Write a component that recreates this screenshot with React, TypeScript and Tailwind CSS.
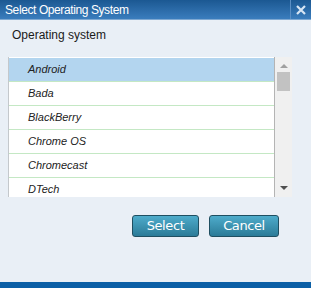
import React from "react";

const systems = ["Android", "Bada", "BlackBerry", "Chrome OS", "Chromecast", "DTech"];

export default function App() {
  return (
    <div className="flex h-[288px] w-[311px] flex-col bg-[#e9eff6] font-['Liberation_Sans',Arial,sans-serif]">
      <div className="flex h-[20px] items-center border-b border-[#7fa9d2] bg-gradient-to-b from-[#1b5892] to-[#3a7dbd]">
        <span className="flex-1 pl-[5px] text-[12px] tracking-[-0.4px] text-white">
          Select Operating System
        </span>
        <div className="flex h-full w-[21px] items-center justify-center border-l border-[#5b8fc4]">
          <svg viewBox="0 0 10 10" className="h-[10px] w-[10px]" fill="none" stroke="#d8e6f4" strokeWidth="2.2">
            <path d="M1 1l8 8M9 1l-8 8" />
          </svg>
        </div>
      </div>

      <div className="pl-[12px] pt-[6px] text-[12px] leading-[18px] text-[#1a1a1a]">Operating system</div>

      <div className="ml-[8px] mt-[13px] flex h-[140px] w-[284px] border-l border-[#c4c8cc]">
        <div className="flex-1 overflow-hidden border-t border-white bg-white">
          {systems.map((s, i) => (
            <div
              key={s}
              className={`flex h-[24px] items-center border-b border-[#c4e8c4] pl-[19px] text-[11px] italic text-[#222] ${
                i === 0 ? "bg-[#b3d5ef]" : ""
              }`}
            >
              {s}
            </div>
          ))}
        </div>
        <div className="flex w-[18px] flex-col items-center border-l border-[#b4b4b4] bg-[#f0f0f0]">
          <div className="mt-[7px] h-0 w-0 border-x-[4px] border-b-[4px] border-x-transparent border-b-[#a0a0a0]" />
          <div className="mt-[4px] h-[19px] w-[13px] bg-[#c2c2c2]" />
          <div className="flex-1" />
          <div className="mb-[7px] h-0 w-0 border-x-[4px] border-t-[4px] border-x-transparent border-t-[#505050]" />
        </div>
      </div>

      <div className="mt-[18px] flex justify-end gap-[10px] pr-[32px]">
        <button className="h-[22px] w-[67px] rounded-[3px] border border-[#1f4f61] bg-gradient-to-b from-[#4eaccb] to-[#2b7b98] font-['DejaVu_Sans',sans-serif] text-[13px] tracking-[-0.4px] text-white">
          Select
        </button>
        <button className="h-[22px] w-[70px] rounded-[3px] border border-[#1f4f61] bg-gradient-to-b from-[#4eaccb] to-[#2b7b98] font-['DejaVu_Sans',sans-serif] text-[13px] tracking-[-0.4px] text-white">
          Cancel
        </button>
      </div>

      <div className="flex-1" />
      <div className="h-[6px] bg-[#0b5fa6]" />
    </div>
  );
}
